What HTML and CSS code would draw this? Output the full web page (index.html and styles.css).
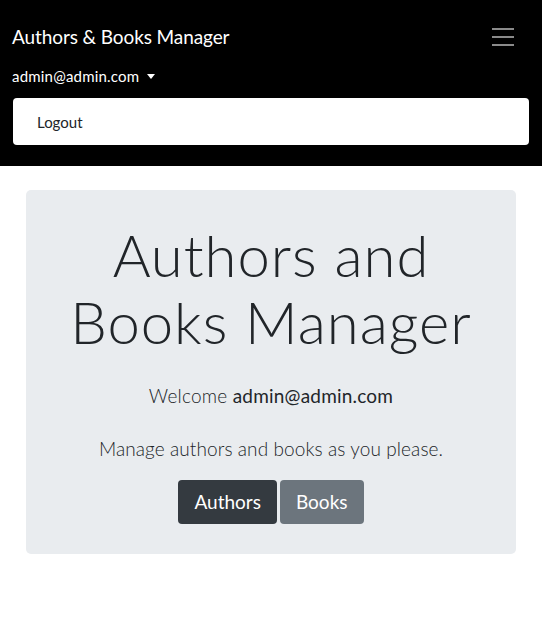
FILE: index.html
```html
<!DOCTYPE html>
<html>
<head>
<meta charset="utf-8">
<link rel="stylesheet" href="styles.css">
</head>
<body>
<nav class="navbar">
  <div class="bar-top">
    <span class="brand">Authors &amp; Books Manager</span>
    <span class="toggler" aria-label="menu">
      <svg width="22" height="20" viewBox="0 0 22 20"><path d="M0 2h22M0 10h22M0 18h22" stroke="#8a8a8a" stroke-width="2"/></svg>
    </span>
  </div>
  <div class="user-toggle">admin@admin.com <span class="caret"></span></div>
  <div class="menu"><span class="menu-item">Logout</span></div>
</nav>
<main class="container">
  <section class="jumbotron">
    <h1 class="display">Authors and<br>Books Manager</h1>
    <p class="welcome">Welcome <span class="email">admin@admin.com</span></p>
    <p class="lead">Manage authors and books as you please.</p>
    <div class="actions">
      <span class="btn btn-dark">Authors</span>
      <span class="btn btn-gray">Books</span>
    </div>
  </section>
</main>
</body>
</html>
```
FILE: styles.css
```css
* { box-sizing: border-box; }
body {
  margin: 0;
  font-family: Lato, "Open Sans", sans-serif;
  color: #212529;
  background: #fff;
}
.navbar {
  background: #000;
  padding: 8px 13px 21px 12px;
}
.bar-top {
  display: flex;
  justify-content: space-between;
  align-items: center;
  height: 56px;
  padding-top: 1px;
}
.brand {
  color: #fff;
  font-size: 19px;
  letter-spacing: -0.1px;
}
.toggler {
  display: flex;
  margin-right: 15px;
}
.user-toggle {
  color: #fff;
  font-size: 15px;
  letter-spacing: 0.2px;
  height: 24px;
  display: flex;
  align-items: center;
}
.caret {
  display: inline-block;
  margin-left: 8px;
  border-top: 5px solid #fff;
  border-left: 4px solid transparent;
  border-right: 4px solid transparent;
}
.menu {
  margin-top: 10px;
  margin-left: 1px;
  background: #fff;
  border-radius: 4px;
  height: 47px;
  display: flex;
  align-items: center;
  padding-left: 24px;
}
.menu-item {
  font-size: 15px;
  color: #212529;
}
.container {
  padding: 24px 26px 0 26px;
}
.jumbotron {
  background: #e9ecef;
  border-radius: 5px;
  padding: 31px 16px;
  text-align: center;
  height: 364px;
}
.display {
  font-size: 58px;
  font-weight: 300;
  letter-spacing: 1px;
  line-height: 67px;
  margin: 0 0 29px;
}
.welcome {
  font-size: 19px;
  font-weight: 300;
  letter-spacing: 0.2px;
  margin: 0 0 30px;
}
.email { font-weight: 400; }
.lead {
  font-size: 19px;
  font-weight: 300;
  letter-spacing: 0.1px;
  margin: 0 0 20px;
}
.actions {
  display: flex;
  justify-content: center;
  gap: 3px;
}
.btn {
  display: inline-block;
  color: #fff;
  font-size: 19px;
  padding: 8px 16px;
  border-radius: 4px;
  height: 44px;
  line-height: 28px;
}
.btn-dark { background: #343a40; }
.btn-gray { background: #6c757d; }
```
